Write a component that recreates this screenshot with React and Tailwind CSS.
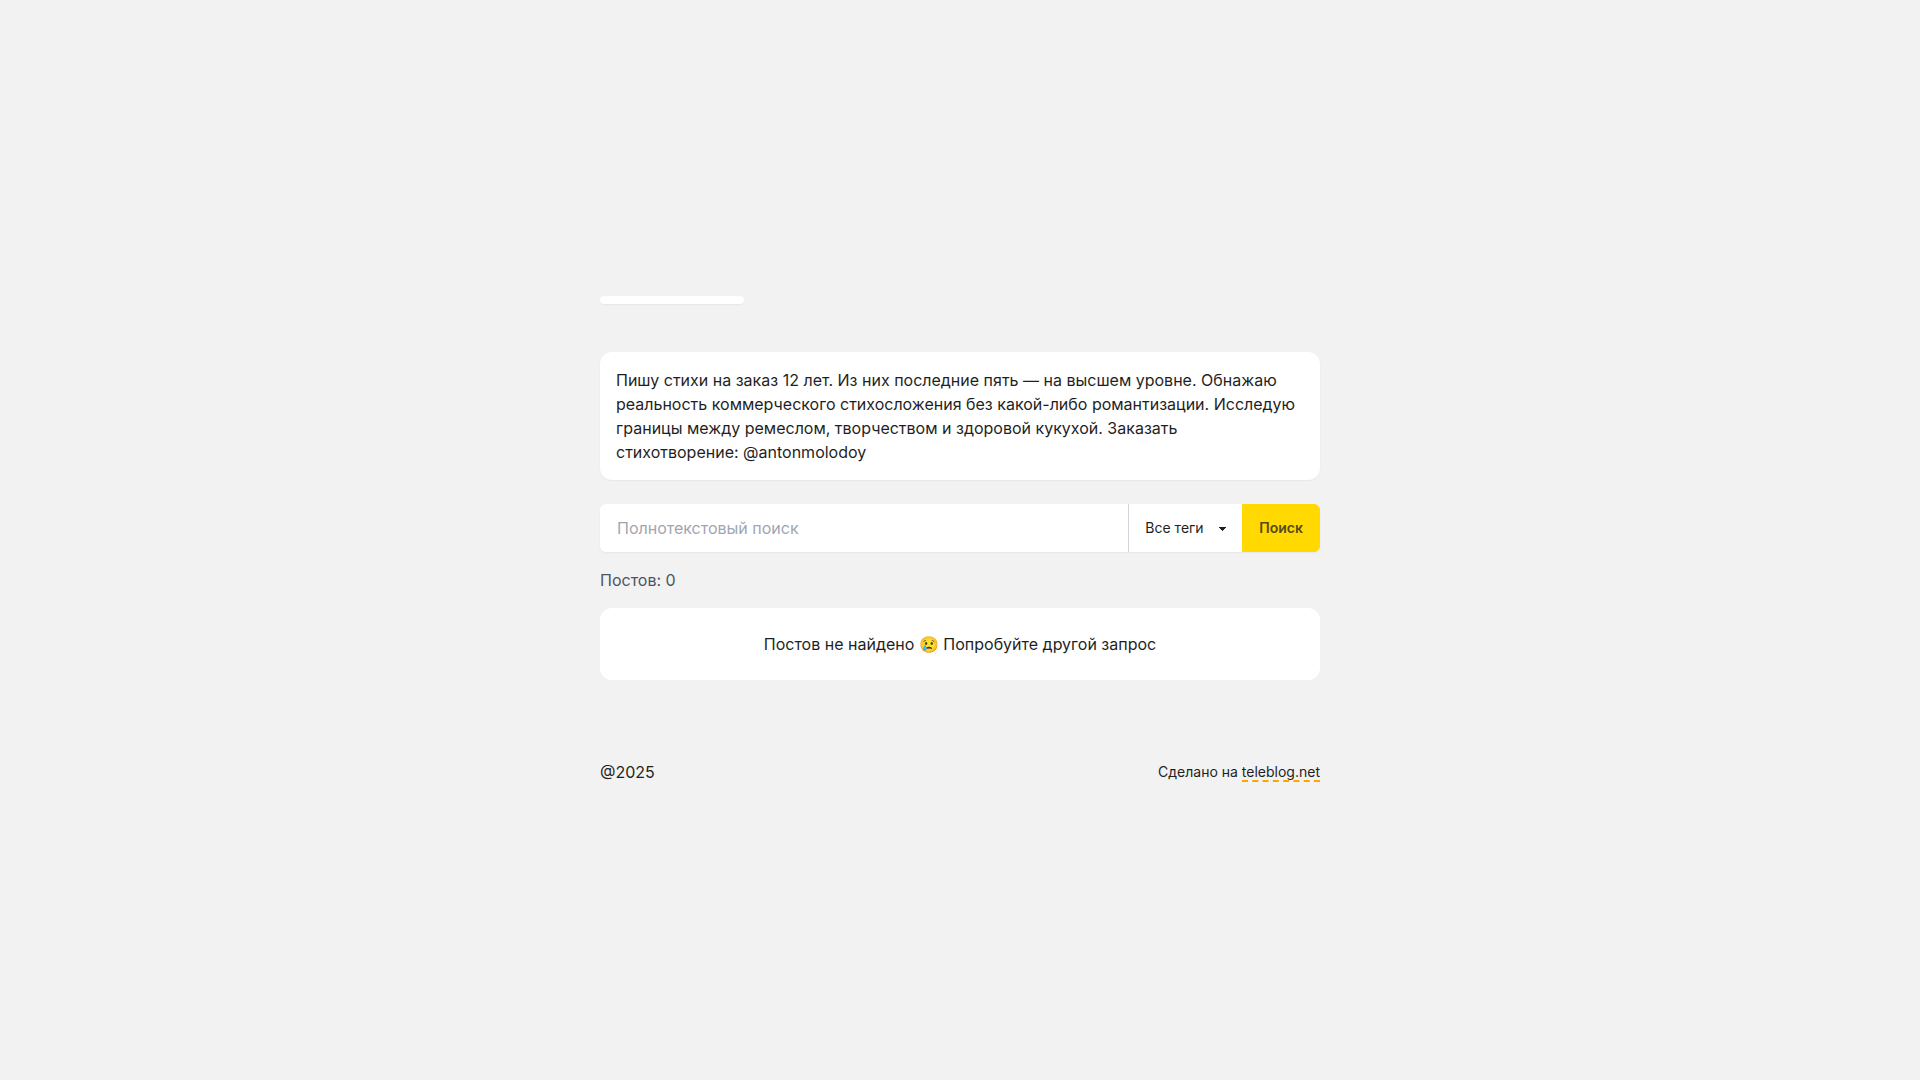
import { useState } from "react";

const tags = ["Все теги"];

const About = () => (
  <section className="rounded-xl bg-white p-4 shadow-[0_1px_2px_rgba(0,0,0,0.05)]">
    <p>
      Пишу стихи на заказ 12 лет. Из них последние пять — на высшем уровне.
      Обнажаю реальность коммерческого стихосложения без какой-либо
      романтизации. Исследую границы между ремеслом, творчеством и здоровой
      кукухой. Заказать стихотворение: @antonmolodoy
    </p>
  </section>
);

const SearchForm = () => {
  const [query, setQuery] = useState("");
  const [tag, setTag] = useState(tags[0]);

  return (
    <form
      onSubmit={(e) => e.preventDefault()}
      className="mt-6 flex h-12 rounded-md shadow-[0_1px_2px_rgba(0,0,0,0.05)]"
    >
      <input
        type="search"
        aria-label="Полнотекстовый поиск"
        placeholder="Полнотекстовый поиск"
        value={query}
        onChange={(e) => setQuery(e.target.value)}
        className="min-w-0 flex-1 rounded-l-md border border-transparent bg-white px-4 placeholder:text-[#9fa6b2] focus:outline-none"
      />
      {/* The arrow is made of two 4px gradient triangles */}
      <select
        aria-label="Тег"
        value={tag}
        onChange={(e) => setTag(e.target.value)}
        className="cursor-pointer appearance-none border-l border-[#d1d5db] bg-white bg-[image:linear-gradient(45deg,transparent_50%,currentColor_50%),linear-gradient(135deg,currentColor_50%,transparent_50%)] bg-[length:4px_4px] bg-[position:calc(100%-19px)_calc(50%+1px),calc(100%-15px)_calc(50%+1px)] bg-no-repeat pr-[38px] pl-4 text-sm focus:outline-none"
      >
        {tags.map((name) => (
          <option key={name}>{name}</option>
        ))}
      </select>
      <button
        type="submit"
        className="cursor-pointer rounded-r-md border border-[#ffd900] bg-[#ffd900] px-4 text-sm font-semibold text-[#544a1a]"
      >
        Поиск
      </button>
    </form>
  );
};

const App = () => {
  return (
    <div className="flex min-h-screen flex-col justify-center bg-[#f2f2f2] px-4 font-['Inter','Noto_Sans',sans-serif] text-[#1f1f1f]">
      <div className="mx-auto w-full max-w-[720px]">
        <header className="mb-12 flex">
          <nav className="w-36 rounded-md bg-white p-1 shadow-[0_1px_2px_rgba(0,0,0,0.05)]" />
        </header>

        <main>
          <About />
          <SearchForm />
          <p className="mt-4 text-[#4b5563]">Постов: 0</p>
          <div className="mt-4 rounded-xl bg-white p-6 text-center">
            Постов не найдено 😢 Попробуйте другой запрос
          </div>
        </main>

        <footer className="mt-20 flex items-center justify-between">
          <span>@2025</span>
          <span className="text-sm">
            Сделано на{" "}
            <a
              href="https://teleblog.net"
              className="border-b-2 border-dashed border-[#ffa500]"
            >
              teleblog.net
            </a>
          </span>
        </footer>
      </div>
    </div>
  );
};

export default App;
